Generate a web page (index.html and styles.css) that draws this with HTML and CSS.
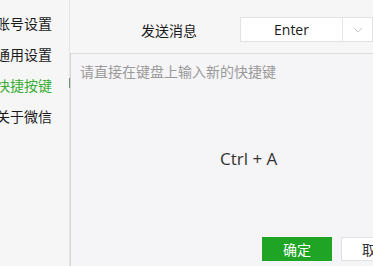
FILE: index.html
```html
<!DOCTYPE html>
<html lang="zh">
<head>
<meta charset="utf-8">
<link rel="stylesheet" href="styles.css">
</head>
<body>
<div class="app">
  <nav class="sidebar">
    <div class="item">账号设置</div>
    <div class="item">通用设置</div>
    <div class="item active">快捷按键</div>
    <div class="item">关于微信</div>
  </nav>
  <main class="content">
    <div class="row">
      <span class="label">发送消息</span>
      <div class="select">
        <span class="value">Enter</span>
        <span class="arrow"><svg width="10" height="6" viewBox="0 0 10 6"><path d="M1 1l4 4 4-4" fill="none" stroke="#c8c8c8" stroke-width="1"/></svg></span>
      </div>
    </div>
  </main>
  <span class="indicator"></span>
  <section class="dialog">
    <div class="hint">请直接在键盘上输入新的快捷键</div>
    <div class="keys">Ctrl + A</div>
    <div class="actions">
      <button class="btn primary">确定</button>
      <button class="btn">取消</button>
    </div>
  </section>
</div>
</body>
</html>
```
FILE: styles.css
```css
html, body {
  margin: 0;
  padding: 0;
  width: 373px;
  height: 266px;
  overflow: hidden;
  background: #f6f6f7;
  font-family: "Noto Sans CJK SC", "Open Sans", sans-serif;
}
.app {
  position: relative;
  display: flex;
  width: 373px;
  height: 266px;
}
.sidebar {
  width: 69px;
  flex: none;
  border-right: 1px solid #e6e6e8;
  padding-top: 8px;
  overflow: hidden;
}
.item {
  font-size: 14px;
  line-height: 31px;
  height: 31px;
  color: #1a1a1a;
  margin-left: -4px;
  white-space: nowrap;
}
.item.active {
  color: #39ad35;
}
.indicator {
  position: absolute;
  left: 69px;
  top: 78px;
  width: 1px;
  height: 10px;
  background: #6f8f6f;
}
.content {
  flex: 1;
  padding-top: 17px;
}
.row {
  display: flex;
  align-items: center;
}
.label {
  font-size: 14px;
  color: #1a1a1a;
  margin-left: 71px;
  width: 99px;
}
.select {
  display: flex;
  height: 23px;
  width: 131px;
  background: #fff;
  border: 1px solid #e2e2e2;
}
.value {
  width: 101px;
  text-align: center;
  font-family: "Open Sans", sans-serif;
  font-size: 14px;
  line-height: 23px;
  color: #1a1a1a;
  border-right: 1px solid #e6e6e6;
}
.arrow {
  flex: 1;
  display: flex;
  align-items: center;
  justify-content: center;
}
.dialog {
  position: absolute;
  left: 70px;
  top: 53px;
  right: 0;
  bottom: 0;
  background: #f5f4f6;
  border-top: 1px solid #dedede;
  border-left: 1px solid #d4d4d4;
  display: flex;
  flex-direction: column;
}
.hint {
  font-size: 14px;
  color: #9a9a9a;
  padding: 7px 0 0 9px;
  line-height: 20px;
}
.keys {
  font-family: "Open Sans", sans-serif;
  font-size: 17px;
  color: #333;
  margin-top: 66px;
  padding-left: 149px;
  line-height: 24px;
}
.actions {
  display: flex;
  gap: 9px;
  margin-top: auto;
  margin-bottom: 5px;
  padding-left: 191px;
}
.btn {
  flex: none;
  width: 70px;
  height: 24px;
  border: 1px solid #e0e0e0;
  background: #fff;
  color: #333;
  font-family: inherit;
  font-size: 14px;
  padding: 0;
  line-height: 22px;
}
.btn.primary {
  background: #1fa425;
  border-color: #1fa425;
  color: #fff;
}
```
